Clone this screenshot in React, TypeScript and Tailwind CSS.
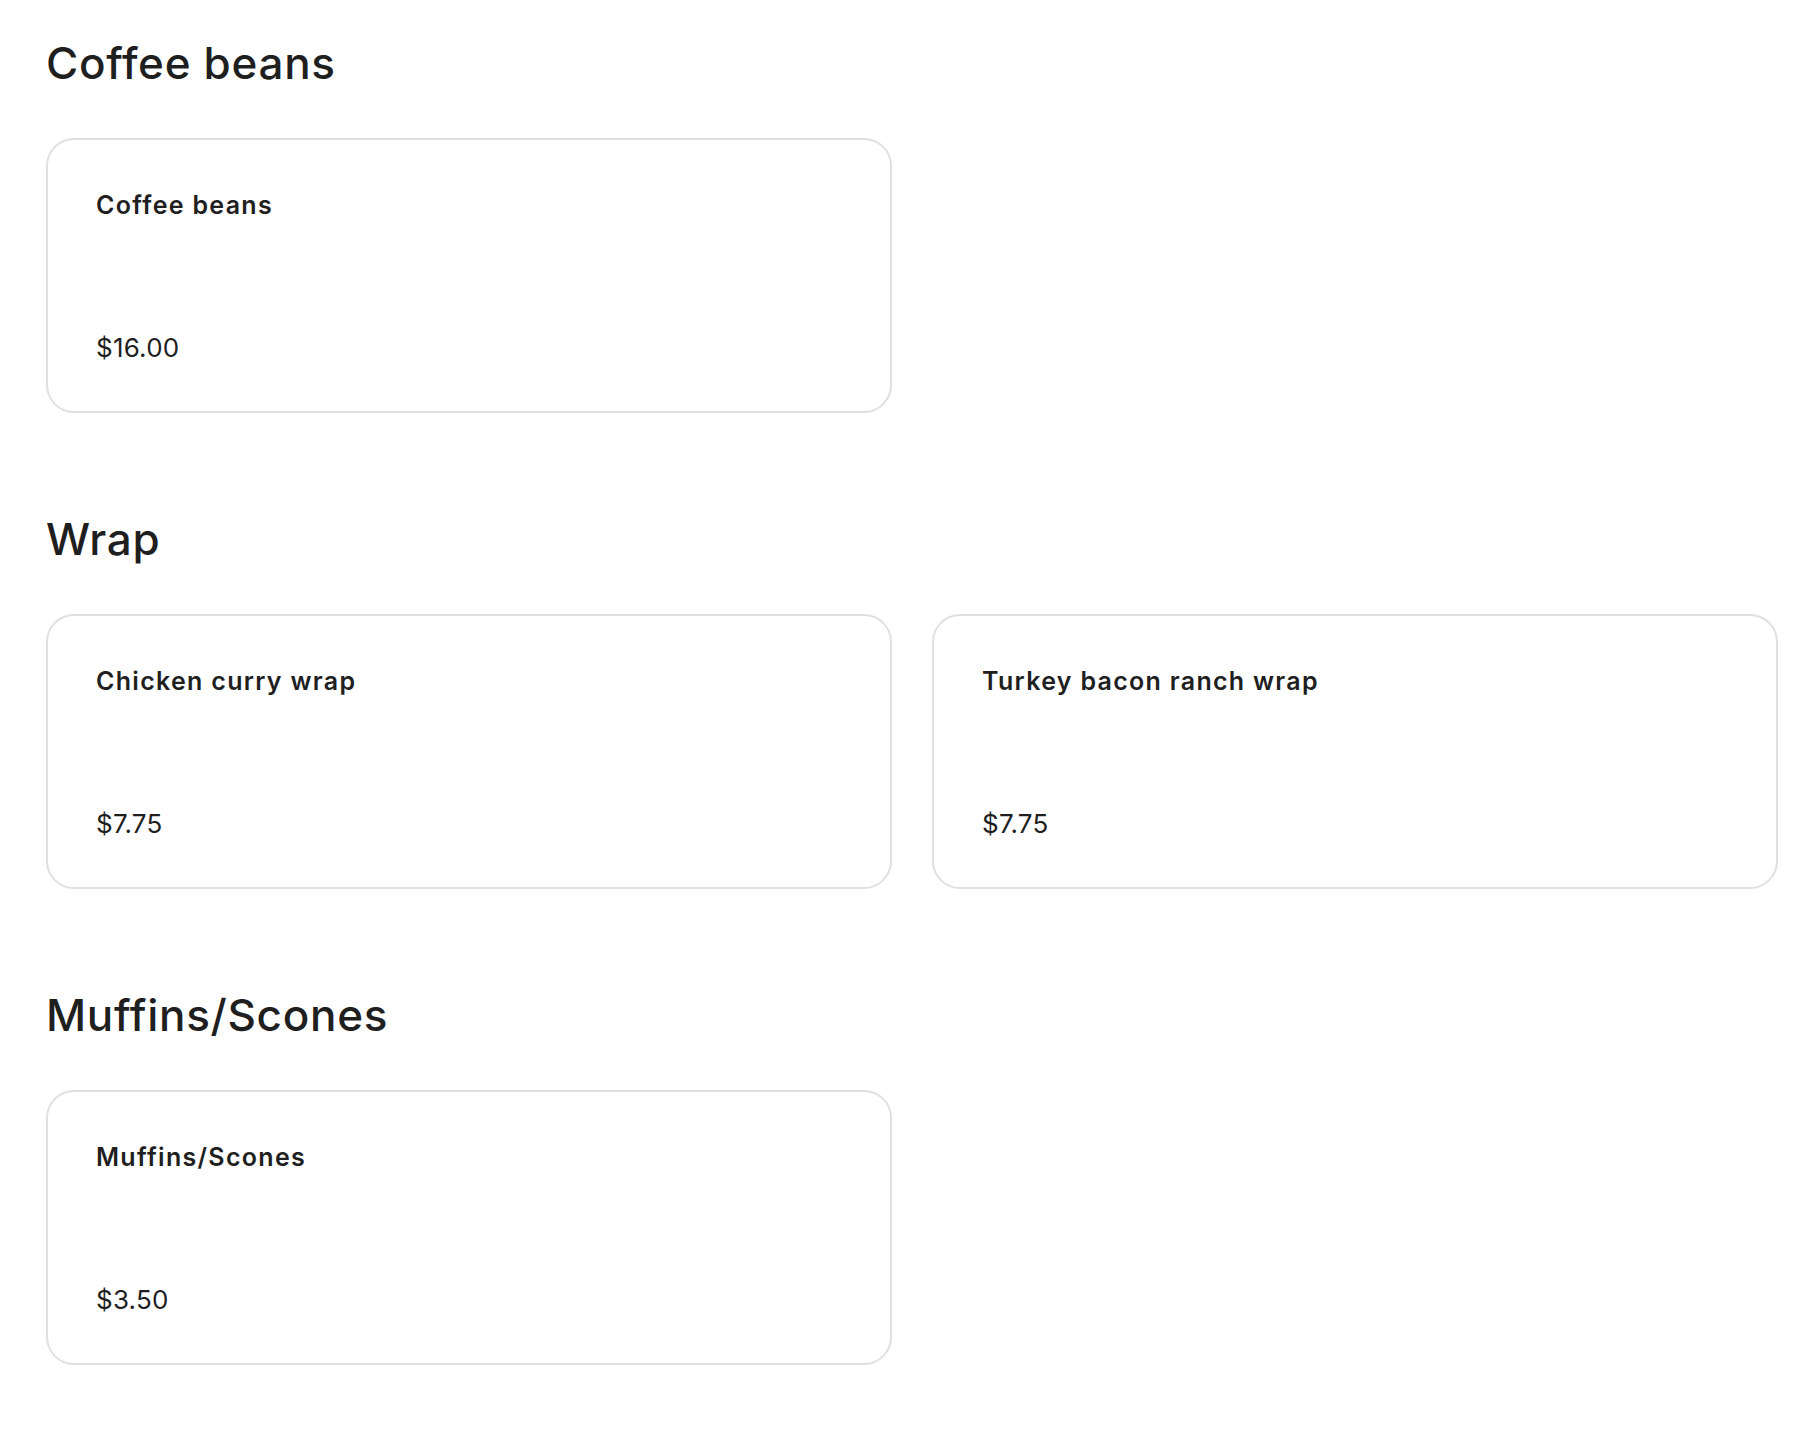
import React from "react";

type Item = { name: string; price: string };
const sections: { title: string; items: Item[] }[] = [
  { title: "Coffee beans", items: [{ name: "Coffee beans", price: "$16.00" }] },
  {
    title: "Wrap",
    items: [
      { name: "Chicken curry wrap", price: "$7.75" },
      { name: "Turkey bacon ranch wrap", price: "$7.75" },
    ],
  },
  { title: "Muffins/Scones", items: [{ name: "Muffins/Scones", price: "$3.50" }] },
];

function Card({ item }: { item: Item }) {
  return (
    <div className="flex h-[275px] flex-col justify-between rounded-[28px] border-2 border-[#e0e0e0] bg-white pl-[48px] pr-[48px] pt-[51px] pb-[48px]">
      <div className="text-[25px] font-semibold leading-[29px] tracking-[1.3px] text-[#1f1f1f]">{item.name}</div>
      <div className="text-[26px] font-normal leading-[31px] tracking-[0.2px] text-[#1f1f1f]">{item.price}</div>
    </div>
  );
}

export default function App() {
  return (
    <div
      className="min-h-[1438px] bg-white pl-[46px] pr-[34px] pt-[37px]"
      style={{ fontFamily: "Inter, 'Noto Sans', sans-serif" }}
    >
      <div className="flex flex-col gap-[100px]">
        {sections.map((s) => (
          <section key={s.title}>
            <h2 className="mb-[49px] text-[44px] font-medium leading-[52px] tracking-[0.7px] text-[#1f1f1f]">{s.title}</h2>
            <div className="grid grid-cols-2 gap-x-[40px]">
              {s.items.map((it) => (
                <Card key={it.name} item={it} />
              ))}
            </div>
          </section>
        ))}
      </div>
    </div>
  );
}
